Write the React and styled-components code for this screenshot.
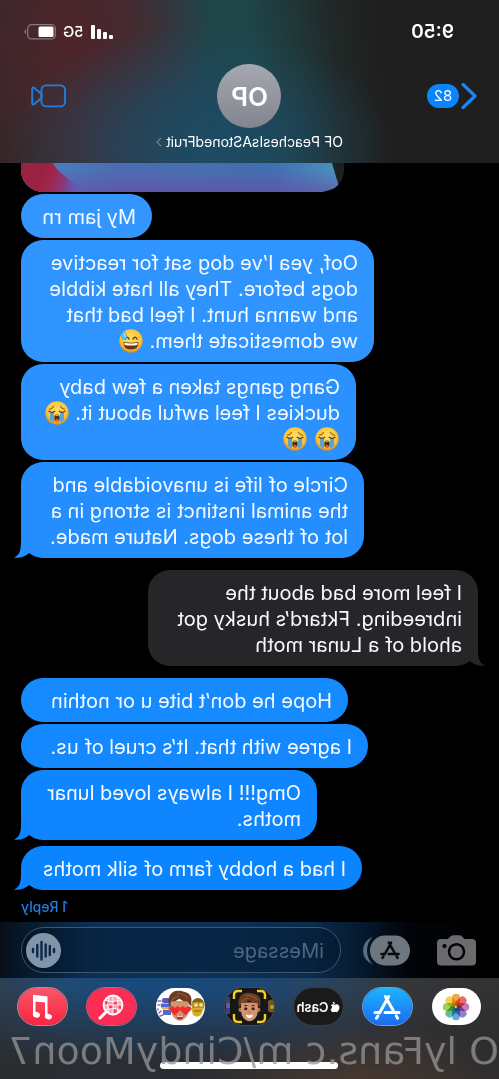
import React from "react";
import styled, { createGlobalStyle } from "styled-components";
import { FaApple } from "react-icons/fa";

const Global = createGlobalStyle`
  *, *::before, *::after { box-sizing: border-box; }
  html { background: #000; }
  body { margin: 0; background: #000; overflow-x: hidden; }
  button, input { font: inherit; color: inherit; }
`;

const Screen = styled.div`
  position: relative;
  display: flex;
  flex-direction: column;
  min-height: 100vh;
  overflow: hidden;
  transform: scaleX(-1);
  background: #000;
  color: #fff;
  font-family: Inter, "Liberation Sans", sans-serif;
`;

const Header = styled.header`
  height: 163px;
  padding-top: 20px;
  display: flex;
  flex-direction: column;
  background:
    radial-gradient(ellipse 190px 120px at 60% 88%, rgba(29, 76, 104, 0.9) 0, rgba(29, 76, 104, 0.6) 45%, rgba(29, 76, 104, 0) 100%),
    radial-gradient(ellipse 130px 130px at 85% 25%, rgba(78, 36, 41, 0.9) 0, rgba(78, 36, 41, 0) 100%),
    linear-gradient(95deg, #1f1f1f 0, #1f1f1f 24%, #212928 33%, #20383a 41%, #1e4548 49%, #1f4548 56%, #2c3c42 64%, #3b3035 74%, #43292e 84%, #392a2d 92%, #362629 100%);
`;

const StatusBar = styled.div`
  height: 24px;
  padding: 0 24px 0 45px;
  display: flex;
  align-items: center;
  justify-content: space-between;
`;

const Clock = styled.time`
  font-size: 19px;
  font-weight: 600;
  line-height: 24px;
`;

const StatusIcons = styled.div`
  display: flex;
  align-items: center;
  gap: 7px;
  font-size: 15px;
  font-weight: 500;
  line-height: 24px;
`;

const NavRow = styled.div`
  height: 64px;
  margin-top: 20px;
  padding: 0 22px;
  display: grid;
  grid-template-columns: 1fr 64px 1fr;
  align-items: center;
  > :last-child { justify-self: end; margin-right: 9px; }
  > :first-child { justify-self: start; }
`;

const PlainButton = styled.button`
  display: flex;
  align-items: center;
  gap: 2px;
  padding: 0;
  border: 0;
  background: none;
  color: #0a84ff;
  cursor: pointer;
`;

const Count = styled.span`
  min-width: 32px;
  height: 24px;
  border-radius: 12px;
  background: #0a84ff;
  color: #fff;
  font-size: 15px;
  line-height: 24px;
  text-align: center;
`;

const Avatar = styled.div`
  width: 64px;
  height: 64px;
  border-radius: 50%;
  background: linear-gradient(#a5a7b1, #82848e);
  font-size: 26px;
  font-weight: 600;
  line-height: 66px;
  text-align: center;
`;

const ContactName = styled.button`
  align-self: center;
  display: flex;
  align-items: center;
  gap: 4px;
  margin-top: 4px;
  padding: 0;
  border: 0;
  background: none;
  font-size: 14px;
  line-height: 20px;
  white-space: nowrap;
  cursor: pointer;
`;

const Thread = styled.main`
  flex: 1;
  display: flex;
  flex-direction: column;
  align-items: flex-end;
  gap: 2px;
  padding: 0 21px;
`;

const Photo = styled.div`
  width: 323px;
  height: 29px;
  border-radius: 0 0 22px 22px;
  overflow: hidden;
  background: #1c2023;
  svg { display: block; width: 100%; height: 100%; }
`;

const Bubble = styled.div`
  position: relative;
  align-self: ${(p) => (p.$in ? "flex-start" : "flex-end")};
  min-width: ${(p) => p.$w}px;
  margin: ${(p) => (p.$in ? "10px 0" : "0")};
  margin-top: ${(p) => (p.$spaced ? "4px" : undefined)};
  padding: 10px 14px 8px 16px;
  border-radius: 22px;
  background: ${(p) => p.$color};
  color: ${(p) => p.$color};
  font-size: 20px;
  line-height: 26px;
  white-space: nowrap;
  p { margin: 0; color: #f4faff; }
`;

const TailSvg = styled.svg`
  position: absolute;
  bottom: 0;
  ${(p) => (p.$in ? "left: -7px; transform: scaleX(-1);" : "right: -7px;")}
`;

const EmojiSvg = styled.svg`
  display: inline-block;
  width: 24px;
  height: 24px;
  margin: 0 1px;
  vertical-align: -5px;
`;

const ReplyLink = styled.a`
  height: 30px;
  padding-top: 5px;
  color: #1c7fe6;
  font-size: 14px;
  font-weight: 500;
  line-height: 20px;
  text-decoration: none;
`;

const Composer = styled.form`
  height: 56px;
  padding: 0 21px 0 23px;
  display: flex;
  align-items: center;
  background: linear-gradient(90deg, #000 0, #010408 18%, #06182b 27%, #0a2c4e 38%, #0c3259 60%, #0b2f54 82%, #07192b 95%, #060f18 100%);
`;

const ToolButton = styled.button`
  display: block;
  padding: 0;
  border: 0;
  margin-right: ${(p) => p.$after}px;
  background: none;
  cursor: pointer;
  svg { display: block; }
`;

const Field = styled.div`
  flex: 1;
  min-width: 0;
  height: 46px;
  padding: 0 4px 0 16px;
  display: flex;
  align-items: center;
  border: 1px solid #3f566d;
  border-radius: 23px;
  background: rgba(0, 12, 30, 0.3);
`;

const TextInput = styled.input`
  flex: 1;
  min-width: 0;
  padding: 2px 0 0;
  border: 0;
  outline: 0;
  background: none;
  font-size: 20px;
  line-height: 26px;
  &::placeholder { color: #4c6781; opacity: 1; }
`;

const Drawer = styled.footer`
  position: relative;
  height: 101px;
  padding: 9px 17px 0;
  background:
    radial-gradient(ellipse 170px 60px at 28% 105%, rgba(84, 62, 48, 0.7), rgba(84, 62, 48, 0)),
    linear-gradient(rgba(43, 43, 46, 0) 10%, rgba(43, 43, 46, 0.95) 85%),
    linear-gradient(90deg, #323232 0, #343638 18%, #2b4158 32%, #1c4876 50%, #184a7c 72%, #1f4a72 88%, #2c3f52 100%);
`;

const AppRow = styled.nav`
  display: flex;
  justify-content: space-between;
`;

const AppPill = styled.button`
  width: 51px;
  height: 39px;
  padding: 0;
  display: flex;
  align-items: center;
  justify-content: center;
  overflow: hidden;
  border: 1px solid ${(p) => p.$edge || "transparent"};
  border-radius: 20px;
  background: ${(p) => p.$bg};
  background-clip: padding-box;
  color: #fff;
  font-size: 13px;
  font-weight: 600;
  cursor: pointer;
`;

const HomeIndicator = styled.div`
  position: absolute;
  bottom: 10px;
  left: 50%;
  width: 178px;
  height: 7px;
  margin-left: -89px;
  border-radius: 4px;
  background: #fff;
`;

const Watermark = styled.div`
  position: absolute;
  bottom: 4px;
  left: 0;
  color: rgba(150, 150, 150, 0.75);
  font-family: "DejaVu Sans", sans-serif;
  font-size: 38px;
  line-height: 48px;
  white-space: nowrap;
`;

const Signal = () => (
  <svg width="23" height="16" viewBox="0 0 23 16" fill="#fff" aria-hidden="true">
    <rect x="0" y="11" width="4" height="4" rx="1" />
    <rect x="6" y="8" width="4" height="7" rx="1" />
    <rect x="12" y="5" width="4" height="10" rx="1" />
    <rect x="18" y="1" width="4" height="14" rx="1" />
  </svg>
);

const Battery = () => (
  <svg width="32" height="16" viewBox="0 0 32 16" aria-hidden="true">
    <rect x="0.7" y="0.7" width="27.6" height="14.2" rx="4" fill="none" stroke="#8d7779" strokeWidth="1.3" />
    <rect x="2.5" y="2.5" width="15" height="10.6" rx="1.5" fill="#fff" />
    <path d="M30 5.5q1.6 .8 1.6 2.3T30 10.1z" fill="#8d7779" />
  </svg>
);

const BackChevron = () => (
  <svg width="16" height="28" viewBox="0 0 16 28" fill="none" stroke="#1686f5" strokeWidth="3.2" strokeLinecap="round" strokeLinejoin="round" aria-hidden="true">
    <path d="M14 2.500L2 14l12 11.500" />
  </svg>
);

const VideoIcon = () => (
  <svg width="35" height="24" viewBox="0 0 35 24" fill="none" stroke="#1f7fe0" strokeWidth="1.9" strokeLinejoin="round" aria-hidden="true">
    <rect x="1" y="1.4" width="23.5" height="21" rx="4.5" />
    <path d="M24.5 10.200l7-6.200q2.300-1.500 2.300 1v14q0 2.500-2.300 1l-7-6.200z" />
  </svg>
);

const Tail = ({ incoming }) => (
  <TailSvg $in={incoming} width="24" height="20" viewBox="0 0 24 20" fill="currentColor" aria-hidden="true">
    <path d="M4 0H17C17 10 17 17 24 19.500C18 20.500 13 18.500 9.500 15.500L3 12Z" />
  </TailSvg>
);

const Sob = () => (
  <EmojiSvg viewBox="0 0 24 24" role="img" aria-label="loudly crying face">
    <defs>
      <radialGradient id="face" cx="50%" cy="40%" r="60%">
        <stop offset="0" stopColor="#ffe062" />
        <stop offset="0.7" stopColor="#fcc539" />
        <stop offset="1" stopColor="#dd8a1c" />
      </radialGradient>
    </defs>
    <circle cx="12" cy="12" r="11.700" fill="url(#face)" />
    <path d="M4.500 8.200q2.500-.4 4-2.700M19.500 8.200q-2.500-.4-4-2.700" stroke="#8a5618" strokeWidth="1.100" fill="none" strokeLinecap="round" />
    <path d="M5 11h4v10.500q-2-.6-4-2.500zM15 11h4v8q-2 1.900-4 2.500z" fill="#58a6d8" />
    <path d="M4 10.300q2.800 2 5.800 0M14.200 10.300q2.800 2 5.800 0" stroke="#5d3a12" strokeWidth="1.300" fill="none" strokeLinecap="round" />
    <ellipse cx="12" cy="17" rx="2.700" ry="3.500" fill="#5b2c10" />
    <path d="M10 19q2-1.800 4 0-2 2.400-4 0z" fill="#e0694f" />
    <path d="M10.200 14.800q1.800-1.400 3.600 0z" fill="#fff" />
  </EmojiSvg>
);

const SweatSmile = () => (
  <EmojiSvg viewBox="0 0 24 24" role="img" aria-label="grinning face with sweat">
    <circle cx="12" cy="12" r="11.700" fill="url(#face)" />
    <path d="M6 10q1.900-3.600 4 0M14 10q1.900-3.600 4 0" stroke="#6b4213" strokeWidth="1.500" fill="none" strokeLinecap="round" />
    <path d="M4.500 13q7.500 1.500 15 0 .3 7.500-7.500 7.500T4.500 13z" fill="#6a3411" />
    <path d="M5.300 13.800q6.700 1.200 13.400 0l-.4 2.200q-6.300 1-12.600 0z" fill="#fff" />
    <path d="M20 .8q-4 5-4 7.200a2.700 2.700 0 0 0 5.400-.3Q21.400 5.500 20 .8z" fill="#5cc3f2" stroke="#2f8fd0" strokeWidth="0.500" />
    <path d="M19.300 4q-1.800 2.600-1.600 4" stroke="#d8f3ff" strokeWidth="0.900" fill="none" />
  </EmojiSvg>
);

const AlbumArt = () => (
  <svg viewBox="0 0 323 29" preserveAspectRatio="none" aria-hidden="true">
    <defs>
      <linearGradient id="art" x1="0" y1="0" x2="1" y2="0">
        <stop offset="0" stopColor="#4a93c0" />
        <stop offset="0.200" stopColor="#426fb0" />
        <stop offset="0.700" stopColor="#4c6cb0" />
        <stop offset="0.900" stopColor="#4a7cc0" />
        <stop offset="1" stopColor="#4f92cc" />
      </linearGradient>
      <linearGradient id="artFade" x1="0" y1="0" x2="0" y2="1">
        <stop offset="0.200" stopColor="#6a50ac" stopOpacity="0" />
        <stop offset="1" stopColor="#6c48a4" stopOpacity="0.600" />
      </linearGradient>
      <linearGradient id="artRed" gradientUnits="userSpaceOnUse" x1="262" y1="20" x2="300" y2="6">
        <stop offset="0" stopColor="#6c48a4" stopOpacity="0" />
        <stop offset="0.450" stopColor="#8b3578" />
        <stop offset="0.700" stopColor="#a02850" />
        <stop offset="1" stopColor="#9a2240" />
      </linearGradient>
    </defs>
    <path d="M12 0L5 24L22 29H323V0Z" fill="url(#art)" />
    <path d="M12 0L5 24L22 29H323V0Z" fill="url(#artFade)" />
    <path d="M291 0Q286 12 254 29H323V0Z" fill="url(#artRed)" />
  </svg>
);

const Camera = () => (
  <svg width="39" height="31" viewBox="0 0 39 31" aria-hidden="true">
    <path fillRule="evenodd" fill="#6b6b6d" d="M4 4h7.500l2.500-2.600q1.200-1.200 2.800-1.200h6q1.600 0 2.800 1.200L28 4h7q4 0 4 4v18.500q0 4-4 4H4q-4 0-4-4V8q0-4 4-4zM19.500 8a8.800 8.800 0 1 0 0 17.600 8.800 8.800 0 0 0 0-17.600zM31.500 9a2.100 2.100 0 1 0 0 4.200 2.100 2.100 0 0 0 0-4.200z" />
    <circle cx="19.500" cy="16.800" r="6.300" fill="#6b6b6d" />
  </svg>
);

const StoreGlyph = ({ color, size, width = 3 }) => (
  <svg width={size} height={size} viewBox="0 0 28 28" fill="none" stroke={color} strokeWidth={width} strokeLinecap="round" aria-hidden="true">
    <path d="M12.300 3.500L21.500 20M23.200 23l1.300 2.200M15.700 3.500L7.500 18M4.700 22.900l-1.200 2.200M2 19.500h14M21.500 19.500H26" />
  </svg>
);

const AppsToggle = () => (
  <svg width="48" height="31" viewBox="0 0 48 31" aria-hidden="true">
    <rect x="0" y="0.500" width="40" height="30" rx="15" fill="#70767d" />
    <path d="M37 1.500q10 4.500 10 14t-10 14q6-5.500 6-14t-6-14z" fill="#5b6f83" />
    <g transform="translate(10 5)">
      <StoreGlyph color="#060b12" size={20} width={3.4} />
    </g>
  </svg>
);

const AudioIcon = () => (
  <svg width="35" height="35" viewBox="0 0 35 35" aria-hidden="true">
    <circle cx="17.500" cy="17.500" r="17.500" fill="#8295a8" />
    <path d="M7 16v3M11.200 13v9M15.300 11.500v12M19.500 9v17.500M23.700 12v11.500M28 16v3" stroke="#0b2a49" strokeWidth="2.400" strokeLinecap="round" />
  </svg>
);

const petals = ["#f29a38", "#e85d4e", "#c86bb0", "#8173c4", "#4f9fdc", "#4cb59a", "#9cc94b", "#f0cf3c"];
const PhotosIcon = () => (
  <svg width="30" height="30" viewBox="0 0 30 30" aria-hidden="true">
    {petals.map((c, i) => (
      <rect key={c} x="11" y="1.800" width="8" height="12.500" rx="4" fill={c} opacity="0.900" transform={`rotate(${-i * 45} 15 15)`} style={{ mixBlendMode: "multiply" }} />
    ))}
  </svg>
);

const MusicIcon = () => (
  <svg width="22" height="26" viewBox="0 0 22 26" fill="#fff" aria-hidden="true">
    <path d="M5.500 2.500L20 .8V21h-2.500V7.500L8 8.600V23H5.500z" />
    <ellipse cx="4.600" cy="22.600" rx="3.600" ry="2.800" transform="rotate(-15 4.600 22.600)" />
    <ellipse cx="16.600" cy="20.700" rx="3.600" ry="2.800" transform="rotate(-15 16.600 20.700)" />
  </svg>
);

const ImagesIcon = () => (
  <svg width="26" height="26" viewBox="0 0 26 26" fill="none" stroke="#fff" aria-hidden="true">
    <g transform="translate(26 0) scale(-1 1)">
      <circle cx="15" cy="11" r="9.500" fill="#f9a3b4" strokeWidth="1.800" />
      <path d="M15 7h4v4h-4zM11 11h4v4h-4zM19 11h4v4h-4zM7 7h4v4H7zM15 15h4v4h-4z" fill="#f5405e" stroke="none" />
      <path d="M15 1.500v19M5.500 11h19M7 6.500q8 2 16 0M7 15.500q8-2 16 0M11 2.500q-2.500 8.500 0 17M19 2.500q2.500 8.500 0 17" strokeWidth="0.900" />
      <path d="M8 18l-6 6" strokeWidth="3" strokeLinecap="round" />
    </g>
  </svg>
);

const Face = () => (
  <g>
    <circle cx="2.500" cy="16" r="2" fill="#b97852" />
    <circle cx="19.500" cy="16" r="2" fill="#b97852" />
    <path d="M3 9h16v8q0 5-3.500 8-2 2-4.500 2t-4.500-2Q3 22 3 17z" fill="#d4946b" />
    <path d="M1.500 14Q-2 3 6.500 .8 17-2.500 20.500 4.500q2 4.500 0 9.500-1-1-1.500-4.500Q15 10 11.500 7 8 10 4 9.500 3 11 1.500 14z" fill="#6b3c20" />
    <path d="M4 6.500Q8 1.500 14 2.500M12 5q4.500 .3 6.500 4" stroke="#94603a" strokeWidth="1" fill="none" />
  </g>
);

const heart = "M0 6.500L-3.900 2.500Q-5.500 .3-3.600-1.200-1.500-2.500 0 .2 1.500-2.500 3.600-1.200 5.500 .3 3.900 2.500z";
const MemojiStickers = () => (
  <svg width="49" height="37" viewBox="0 0 49 37" aria-hidden="true">
    <g>
      <circle cx="7" cy="16.500" r="6.500" fill="#7d5f1e" />
      <rect x="0.500" y="14" width="13" height="6" rx="2" fill="#b8902c" />
      <circle cx="4" cy="17" r="1.800" fill="#f8e79a" /><circle cx="9" cy="17" r="1.800" fill="#f8e79a" />
      <path d="M1 20h13l-2 7q-4 3-8 0z" fill="#d9ac27" />
      <path d="M4 23h7" stroke="#7d5f1e" strokeWidth="1.200" />
    </g>
    <g>
      <rect x="35" y="10" width="8" height="5" rx="2" fill="#5a58b9" />
      <path d="M34 15.500h10v4H34zM34 22h8v5h-8z" fill="#4a6dc9" />
      <path d="M34 19.300h9v2.200h-9z" fill="#e0b13c" />
      <path d="M44 13h3M45 17h2M44 23l2 2M42 27l3 1M47 21v1" stroke="#8a65c9" strokeWidth="1.500" strokeLinecap="round" />
    </g>
    <g transform="translate(13 3) scale(1.100)">
      <Face />
      <path d={heart} transform="translate(6 15.500) scale(1.050)" fill="#f22c2c" />
      <path d={heart} transform="translate(15.500 15.500) scale(1.050)" fill="#f22c2c" />
      <path d="M7.500 22q3.500 1.200 7 0-.8 4-3.500 4T7.500 22z" fill="#a43436" />
      <path d="M8.200 22.300q2.800 .8 5.600 0v1.200H8.400z" fill="#fff" />
    </g>
  </svg>
);

const MemojiCamera = () => (
  <svg width="49" height="37" viewBox="0 0 49 37" aria-hidden="true">
    <circle cx="2" cy="18" r="6.500" fill="#6b5a25" />
    <circle cx="2" cy="19" r="2" fill="#c39c30" />
    <path d="M44 9h4v17h-4z" fill="#38427f" />
    <path d="M44 15h4v5h-4z" fill="#6a5a9c" />
    <rect x="6" y="0" width="37" height="37" rx="8" fill="#171717" />
    <path d="M17 3h-4q-4 0-4 4v4M32 3h4q4 0 4 4v4M17 34h-4q-4 0-4-4v-4M32 34h4q4 0 4-4v-4" stroke="#f4cf21" strokeWidth="2.400" fill="none" />
    <g transform="translate(13 5) scale(1.050)">
      <Face />
      <circle cx="7.500" cy="15" r="1.500" fill="#3a2114" />
      <circle cx="14.500" cy="15" r="1.500" fill="#3a2114" />
      <path d="M6 12.300q1.500-1 3 0M13 12.300q1.500-1 3 0" stroke="#5b3218" strokeWidth="1" fill="none" />
      <path d="M10 18q1 .8 2 0" stroke="#a9683f" strokeWidth="0.900" fill="none" />
      <path d="M7.500 20.500q3.500 1.200 7 0-.8 3.500-3.500 3.500t-3.500-3.500z" fill="#fff" />
    </g>
  </svg>
);

export default function App() {
  return (
    <Screen>
      <Global />
      <Header>
        <StatusBar>
          <Clock>9:50</Clock>
          <StatusIcons>
            <Signal />
            <span>5G</span>
            <Battery />
          </StatusIcons>
        </StatusBar>
        <NavRow>
          <PlainButton type="button" aria-label="Back">
            <BackChevron />
            <Count>82</Count>
          </PlainButton>
          <Avatar>OP</Avatar>
          <PlainButton type="button" aria-label="Video call">
            <VideoIcon />
          </PlainButton>
        </NavRow>
        <ContactName type="button">
          OF PeachesIsAStonedFruit
          <svg width="6" height="10" viewBox="0 0 6 10" fill="none" stroke="#7d8288" strokeWidth="1.200" aria-hidden="true">
            <path d="M1 .8L5 5 1 9.200" />
          </svg>
        </ContactName>
      </Header>

      <Thread>
        <Photo><AlbumArt /></Photo>
        <Bubble $w={131} $color="#3396ff"><p>My jam rn</p></Bubble>
        <Bubble $w={353} $color="#3094ff">
          <p>Oof, yea I’ve dog sat for reactive<br />dogs before. They all hate kibble<br />and wanna hunt. I feel bad that<br />we domesticate them. <SweatSmile /></p>
        </Bubble>
        <Bubble $w={335} $color="#2a91ff">
          <p>Gang gangs taken a few baby<br />duckies I feel awful about it. <Sob /><br /><Sob /> <Sob /></p>
        </Bubble>
        <Bubble $w={343} $color="#248eff">
          <p>Circle of life is unavoidable and<br />the animal instinct is strong in a<br />lot of these dogs. Nature made.</p>
          <Tail />
        </Bubble>
        <Bubble $in $w={330} $color="#262628">
          <p>I feel more bad about the<br />inbreeding. Fktard’s husky got<br />ahold of a Lunar moth</p>
          <Tail incoming />
        </Bubble>
        <Bubble $w={327} $color="#168aff"><p>Hope he don’t bite u or nothin</p></Bubble>
        <Bubble $w={347} $color="#1388ff"><p>I agree with that. It’s cruel of us.</p></Bubble>
        <Bubble $w={296} $color="#0f86ff">
          <p>Omg!!! I always loved lunar<br />moths.</p>
          <Tail />
        </Bubble>
        <Bubble $spaced $w={341} $color="#0b84ff">
          <p>I had a hobby farm of silk moths</p>
          <Tail />
        </Bubble>
        <ReplyLink href="#replies">1 Reply</ReplyLink>
      </Thread>

      <Composer onSubmit={(e) => e.preventDefault()}>
        <ToolButton type="button" $after={27} aria-label="Camera"><Camera /></ToolButton>
        <ToolButton type="button" $after={21} aria-label="Apps"><AppsToggle /></ToolButton>
        <Field>
          <TextInput type="text" placeholder="iMessage" aria-label="iMessage" />
          <ToolButton type="button" $after={0} aria-label="Record audio"><AudioIcon /></ToolButton>
        </Field>
      </Composer>

      <Drawer>
        <AppRow aria-label="iMessage apps">
          <AppPill type="button" aria-label="Photos" $bg="#fff"><PhotosIcon /></AppPill>
          <AppPill type="button" aria-label="App Store" $bg="linear-gradient(#1fb3fb, #1a6cf3)" $edge="#5fa9ee"><StoreGlyph color="#fff" size={28} /></AppPill>
          <AppPill type="button" $bg="#1b1a19" $edge="#3a3a38"><FaApple size={12} />Cash</AppPill>
          <AppPill type="button" aria-label="Memoji" $bg="#141414" $edge="#4d4a44"><MemojiCamera /></AppPill>
          <AppPill type="button" aria-label="Memoji stickers" $bg="#fff"><MemojiStickers /></AppPill>
          <AppPill type="button" aria-label="Images" $bg="#fb2d55" $edge="#d0607c"><ImagesIcon /></AppPill>
          <AppPill type="button" aria-label="Music" $bg="linear-gradient(#fb5569, #f92541)" $edge="#d8808c"><MusicIcon /></AppPill>
        </AppRow>
        <HomeIndicator />
        <Watermark>O lyFans.c m/CindyMoon7</Watermark>
      </Drawer>
    </Screen>
  );
}
